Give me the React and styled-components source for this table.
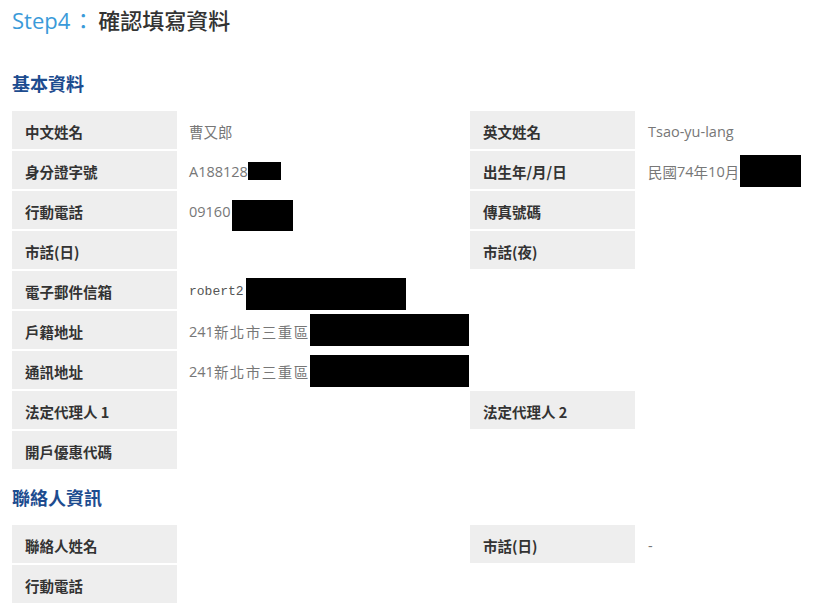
import React from "react";
import styled, { createGlobalStyle } from "styled-components";

const Global = createGlobalStyle`
  html, body { margin: 0; padding: 0; background: #fff; }
  body { font-family: "Open Sans", "Noto Sans CJK TC", sans-serif; }
`;

const Page = styled.div`
  padding: 4px 0 0 12px;
  width: 837px;
  box-sizing: border-box;
`;

const Title = styled.h1`
  margin: 0;
  height: 31px;
  line-height: 30px;
  font-size: 22px;
  font-weight: 400;
  color: #333;
  font-family: "Open Sans", "Noto Sans CJK TC", sans-serif;
`;

const Step = styled.span`
  color: #3a9ad9;
  font-weight: 500;
`;

const Colon = styled.span`
  font-family: "Noto Sans CJK TC", sans-serif;
  font-weight: 400;
  margin: 0 4px 0 2px;
`;

const Cjk = styled.span`
  font-family: "Noto Sans CJK TC", sans-serif;
  color: ${(p) => p.$color || "inherit"};
  font-weight: ${(p) => p.$weight || "inherit"};
  letter-spacing: ${(p) => p.$spacing || 0}px;
`;

const Heading = styled.h2`
  margin: ${(p) => p.$top}px 0 15px;
  line-height: 26px;
  height: 26px;
  font-size: 18px;
  font-weight: 700;
  color: #1d4c8f;
  font-family: "Noto Sans CJK TC", sans-serif;
`;

const Table = styled.div`
  display: grid;
  grid-template-columns: 165px 293px 165px 1fr;
  grid-auto-rows: 38px;
  row-gap: 2px;
`;

const Label = styled.div`
  background: #eeeeee;
  display: flex;
  align-items: center;
  padding: 2px 0 0 13px;
  font-family: "Noto Sans CJK TC", sans-serif;
  font-size: 14.5px;
  font-weight: 700;
  color: #333;
  white-space: nowrap;
`;

const Value = styled.div`
  display: flex;
  align-items: center;
  padding: 2px 0 0 ${(p) => p.$pad || 12}px;
  font-family: "Open Sans", "Noto Sans CJK TC", sans-serif;
  font-size: 14.5px;
  color: #777;
  white-space: nowrap;
  overflow: visible;
`;

const Mono = styled.span`
  font-family: "Liberation Mono", "DejaVu Sans Mono", monospace;
  font-size: 13px;
  color: #555;
`;

const Empty = styled.div``;

const Redact = styled.span`
  display: inline-block;
  flex: none;
  background: #000;
  width: ${(p) => p.$w}px;
  height: ${(p) => p.$h}px;
  margin-left: ${(p) => p.$ml || 0}px;
  transform: translateY(${(p) => p.$dy || 0}px);
`;

export default function App() {
  return (
    <>
      <Global />
      <Page>
        <Title>
          <Step>Step4<Colon>：</Colon></Step>
          <Cjk $color="#333" $weight={500}>確認填寫資料</Cjk>
        </Title>

        <Heading $top={35}>基本資料</Heading>
        <Table>
          <Label>中文姓名</Label>
          <Value><Cjk>曹又郎</Cjk></Value>
          <Label>英文姓名</Label>
          <Value $pad={13}>Tsao-yu-lang</Value>

          <Label>身分證字號</Label>
          <Value>A188128<Redact $w={33} $h={18} $ml={0} $dy={0} /></Value>
          <Label>出生年/月/日</Label>
          <Value $pad={13}><Cjk>民國</Cjk>74<Cjk>年</Cjk>10<Cjk>月</Cjk><Redact $w={61} $h={32} $ml={1} $dy={0} /></Value>

          <Label>行動電話</Label>
          <Value>09160<Redact $w={61} $h={31} $ml={2} $dy={4} /></Value>
          <Label>傳真號碼</Label>
          <Value />

          <Label>市話(日)</Label>
          <Value />
          <Label>市話(夜)</Label>
          <Value />

          <Label>電子郵件信箱</Label>
          <Value><Mono>robert2</Mono><Redact $w={160} $h={32} $ml={2} $dy={3} /></Value>
          <Empty />
          <Empty />

          <Label>戶籍地址</Label>
          <Value>241<Cjk $spacing={1.5}>新北市三重區</Cjk><Redact $w={159} $h={32} $ml={0} $dy={-1} /></Value>
          <Empty />
          <Empty />

          <Label>通訊地址</Label>
          <Value>241<Cjk $spacing={1.5}>新北市三重區</Cjk><Redact $w={159} $h={32} $ml={0} $dy={0} /></Value>
          <Empty />
          <Empty />

          <Label>法定代理人 1</Label>
          <Value />
          <Label>法定代理人 2</Label>
          <Value />

          <Label>開戶優惠代碼</Label>
          <Value />
          <Empty />
          <Empty />
        </Table>

        <Heading $top={15}>聯絡人資訊</Heading>
        <Table>
          <Label>聯絡人姓名</Label>
          <Value />
          <Label>市話(日)</Label>
          <Value $pad={13}>-</Value>

          <Label>行動電話</Label>
          <Value />
          <Empty />
          <Empty />
        </Table>
      </Page>
    </>
  );
}
